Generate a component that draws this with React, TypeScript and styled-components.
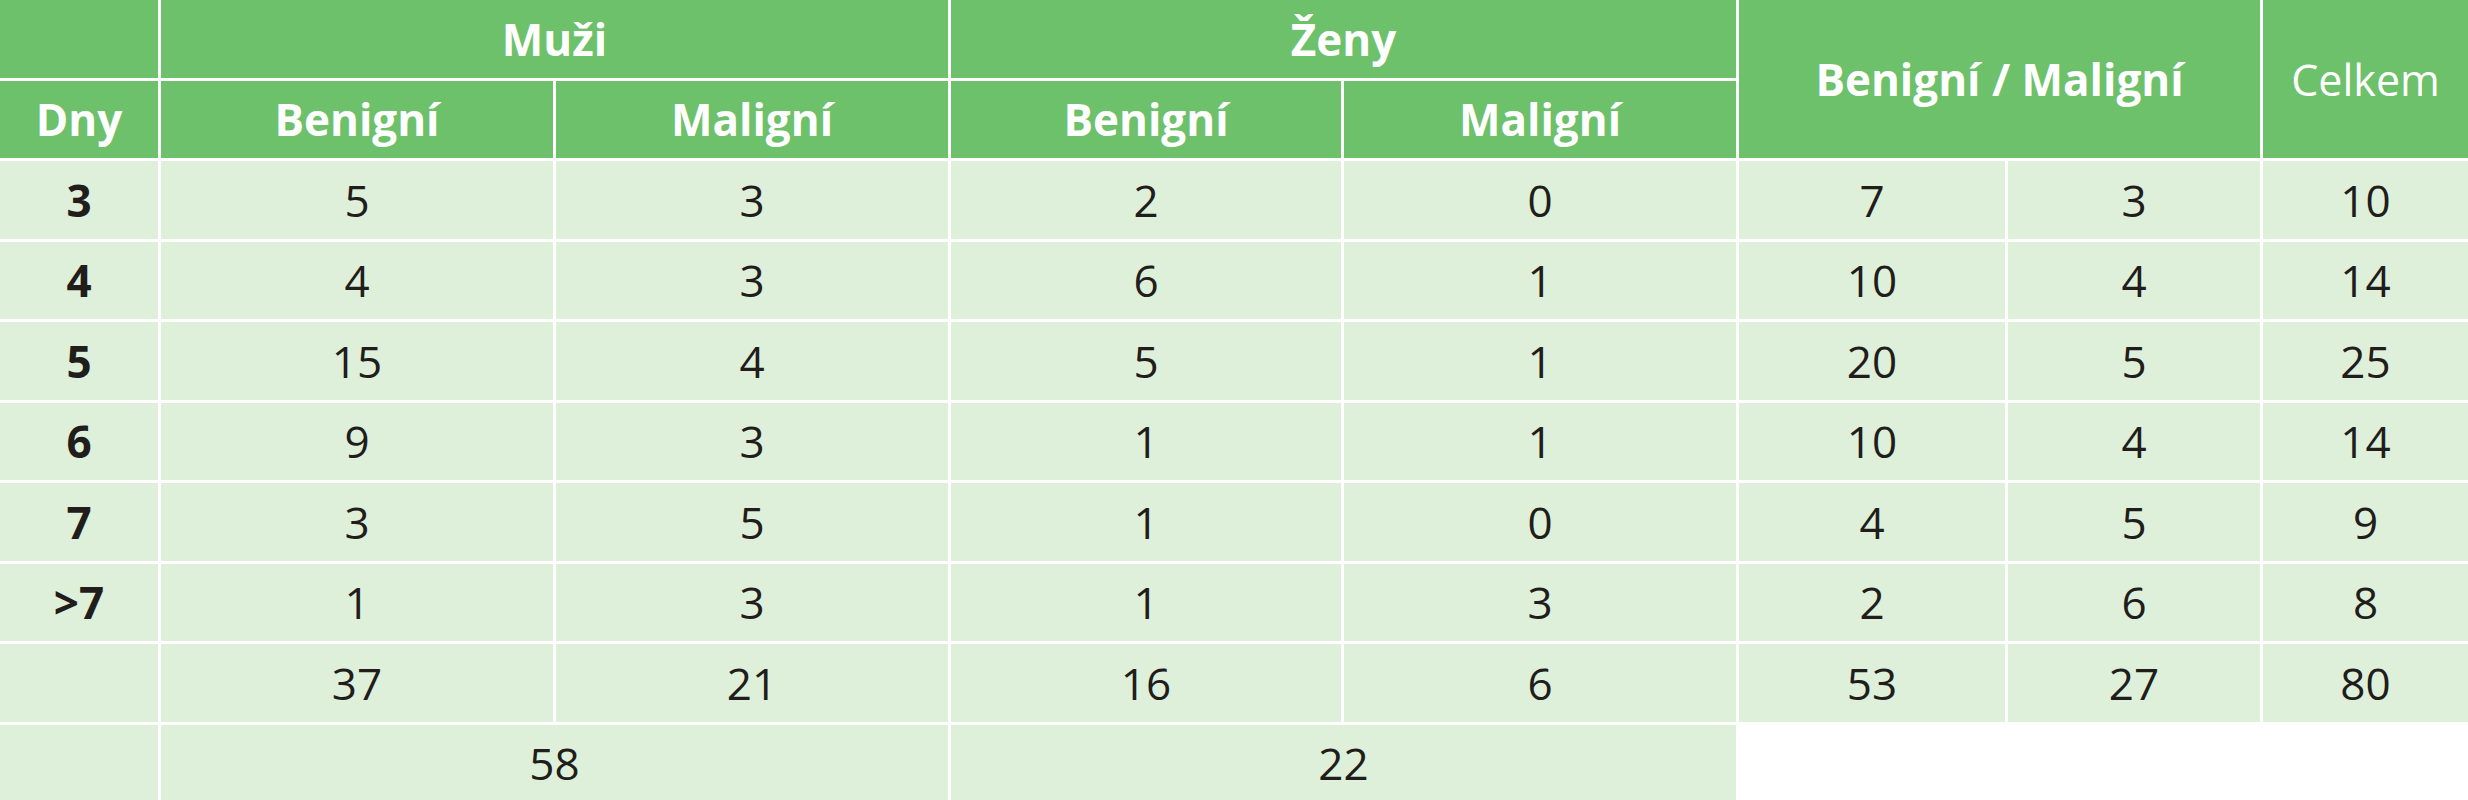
import styled, { createGlobalStyle } from 'styled-components';

const GlobalStyle = createGlobalStyle`
  html, body {
    margin: 0;
    padding: 0;
    background: #ffffff;
    overflow: hidden;
  }
  body {
    width: 2468px;
    height: 800px;
    font-family: "Open Sans", "Liberation Sans", sans-serif;
  }
`;

const Table = styled.table`
  table-layout: fixed;
  border-collapse: separate;
  border-spacing: 3px;
  margin: -3px 0 0 -3px;
  width: 2474px;
  background: #ffffff;
`;

const Row = styled.tr`
  height: 77.5px;
`;

const HeadCell = styled.th<{ $light?: boolean }>`
  background: #6cc16a;
  color: #ffffff;
  font-size: ${(p) => (p.$light ? '43px' : '44px')};
  font-weight: ${(p) => (p.$light ? 400 : 700)};
  text-align: center;
  vertical-align: middle;
  padding: 0;
  line-height: 1;
`;

const DataCell = styled.td<{ $bold?: boolean }>`
  background: #dff0da;
  color: #211d1b;
  font-size: 44px;
  font-weight: ${(p) => (p.$bold ? 700 : 400)};
  text-align: center;
  vertical-align: middle;
  padding: 0;
  line-height: 1;
`;

const widths = [158, 392, 392, 390, 392, 266, 252, 205];

const rows: (string | number)[][] = [
  ['3', 5, 3, 2, 0, 7, 3, 10],
  ['4', 4, 3, 6, 1, 10, 4, 14],
  ['5', 15, 4, 5, 1, 20, 5, 25],
  ['6', 9, 3, 1, 1, 10, 4, 14],
  ['7', 3, 5, 1, 0, 4, 5, 9],
  ['>7', 1, 3, 1, 3, 2, 6, 8],
  ['', 37, 21, 16, 6, 53, 27, 80],
];

const App = () => {
  return (
    <>
      <GlobalStyle />
      <Table>
        <colgroup>
          {widths.map((w, i) => (
            <col key={i} style={{ width: w }} />
          ))}
        </colgroup>
        <thead>
          <Row>
            <HeadCell />
            <HeadCell colSpan={2}>Muži</HeadCell>
            <HeadCell colSpan={2}>Ženy</HeadCell>
            <HeadCell colSpan={2} rowSpan={2}>Benigní / Maligní</HeadCell>
            <HeadCell rowSpan={2} $light>Celkem</HeadCell>
          </Row>
          <Row>
            <HeadCell>Dny</HeadCell>
            <HeadCell>Benigní</HeadCell>
            <HeadCell>Maligní</HeadCell>
            <HeadCell>Benigní</HeadCell>
            <HeadCell>Maligní</HeadCell>
          </Row>
        </thead>
        <tbody>
          {rows.map((r, i) => (
            <Row key={i}>
              {r.map((v, j) => (
                <DataCell key={j} $bold={j === 0}>
                  {v}
                </DataCell>
              ))}
            </Row>
          ))}
          <Row>
            <DataCell />
            <DataCell colSpan={2}>58</DataCell>
            <DataCell colSpan={2}>22</DataCell>
          </Row>
        </tbody>
      </Table>
    </>
  );
};

export default App;
